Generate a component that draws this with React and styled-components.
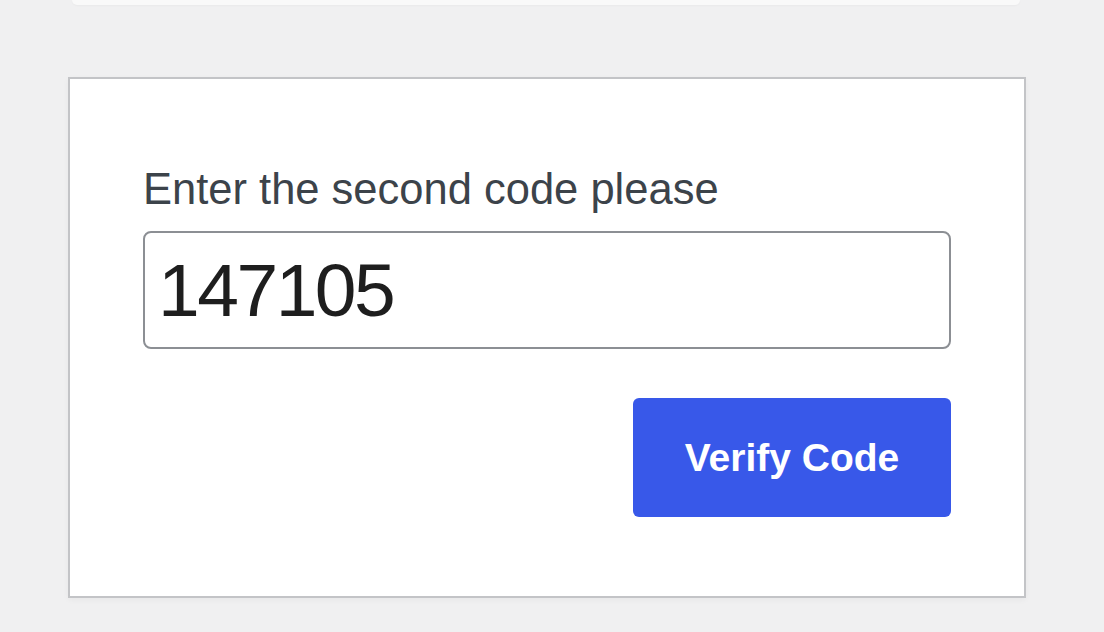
import React, { useState } from "react";
import styled, { createGlobalStyle } from "styled-components";

const GlobalStyle = createGlobalStyle`
  html, body {
    margin: 0;
    padding: 0;
    background: #f0f0f1;
  }
  body {
    font-family: "Liberation Sans", Arial, sans-serif;
    overflow: hidden;
  }
`;

function App() {
  const [code, setCode] = useState("147105");

  return (
    <Page>
      <GlobalStyle />
      <Notice />
      <LoginCard>
        <Label htmlFor="authcode">Enter the second code please</Label>
        <CodeInput
          id="authcode"
          type="text"
          value={code}
          onChange={(e) => setCode(e.target.value)}
        />
        <Actions>
          <SubmitBtn type="button">Verify Code</SubmitBtn>
        </Actions>
      </LoginCard>
    </Page>
  );
}

export default App;

const Page = styled.div`
  display: flex;
  flex-direction: column;
  padding-left: 68px;
  width: 1104px;
  height: 632px;
  box-sizing: border-box;
`;

const Notice = styled.div`
  width: 948px;
  height: 5px;
  margin-left: 4px;
  background: #f9f9f9;
  border-radius: 0 0 6px 6px;
  box-shadow: 0 1px 2px rgba(0, 0, 0, 0.03);
`;

const LoginCard = styled.div`
  width: 958px;
  margin-top: 72px;
  box-sizing: border-box;
  background: #fff;
  border: 2px solid #c3c4c7;
  box-shadow: 0 2px 6px rgba(0, 0, 0, 0.04);
  padding: 86px 73px 79px;
  display: flex;
  flex-direction: column;
`;

const Label = styled.label`
  display: block;
  font-size: 43.5px;
  line-height: 48px;
  color: #3c434a;
  margin-bottom: 18px;
`;

const CodeInput = styled.input`
  width: 100%;
  height: 118px;
  box-sizing: border-box;
  border: 2px solid #8c8f94;
  border-radius: 8px;
  padding: 0 8px 0 13px;
  margin: 0;
  font-family: "Liberation Sans", Arial, sans-serif;
  font-size: 75px;
  letter-spacing: -2.5px;
  color: #1e1e1e;
  background: #fff;
  outline: none;
`;

const Actions = styled.div`
  display: flex;
  justify-content: flex-end;
  margin-top: 49px;
`;

const SubmitBtn = styled.button`
  width: 318px;
  height: 119px;
  border: none;
  border-radius: 6px;
  background: #3858e9;
  color: #fff;
  font-family: "Liberation Sans", Arial, sans-serif;
  font-size: 39px;
  font-weight: 700;
  padding: 0;
  cursor: pointer;
  &:hover {
    background: #2145e6;
  }
`;
